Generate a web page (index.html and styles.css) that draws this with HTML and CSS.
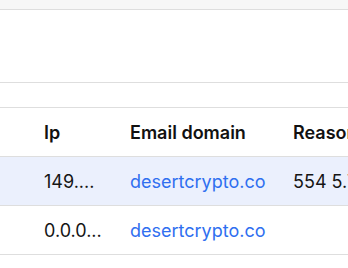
FILE: index.html
```html
<!DOCTYPE html>
<html lang="en">
<head>
    <meta charset="UTF-8">
    <meta name="viewport" content="width=device-width, initial-scale=1.0">
    <title>Bounces</title>
    <link rel="stylesheet" href="styles.css">
</head>
<body>
    <div class="topbar"></div>
    <div class="panel"></div>
    <div class="spacer"></div>
    <table class="bounces">
        <thead>
            <tr>
                <th class="check"></th>
                <th class="ip">Ip</th>
                <th class="domain">Email domain</th>
                <th class="reason">Reason</th>
            </tr>
        </thead>
        <tbody>
            <tr class="selected">
                <td class="check"></td>
                <td class="ip">149....</td>
                <td class="domain"><a href="#">desertcrypto.co</a></td>
                <td class="reason">554 5.7.1 rejected</td>
            </tr>
            <tr>
                <td class="check"></td>
                <td class="ip">0.0.0...</td>
                <td class="domain"><a href="#">desertcrypto.co</a></td>
                <td class="reason"></td>
            </tr>
        </tbody>
    </table>
</body>
</html>
```

FILE: styles.css
```css
*{
    margin: 0;
    padding: 0;
    box-sizing: border-box;
}
html, body{
    height: 100%;
}
body{
    font-family: Inter, "Noto Sans", sans-serif;
    background: #fff;
    color: #151515;
    overflow: hidden;
    width: 348px;
}
.topbar{
    height: 10px;
    background: #f7f7f7;
    border-bottom: 1px solid #dedede;
}
.panel{
    height: 73px;
    border-bottom: 1px solid #dedede;
}
.spacer{
    height: 24px;
}
.bounces{
    border-collapse: collapse;
    table-layout: fixed;
    width: 460px;
    border-top: 1px solid #dedede;
}
.bounces th, .bounces td{
    height: 49px;
    border-bottom: 1px solid #dedede;
    text-align: left;
    vertical-align: middle;
    white-space: nowrap;
    overflow: hidden;
    font-size: 18px;
    padding: 0;
}
.bounces th{
    font-weight: 600;
    color: #111;
}
.bounces .check{
    width: 44px;
}
.bounces .ip{
    width: 86px;
}
.bounces .domain{
    width: 163px;
}
.bounces .reason{
    width: 168px;
}
.selected td{
    background: #ebf0fd;
}
.bounces a{
    color: #2f6ff0;
    text-decoration: none;
}
```
